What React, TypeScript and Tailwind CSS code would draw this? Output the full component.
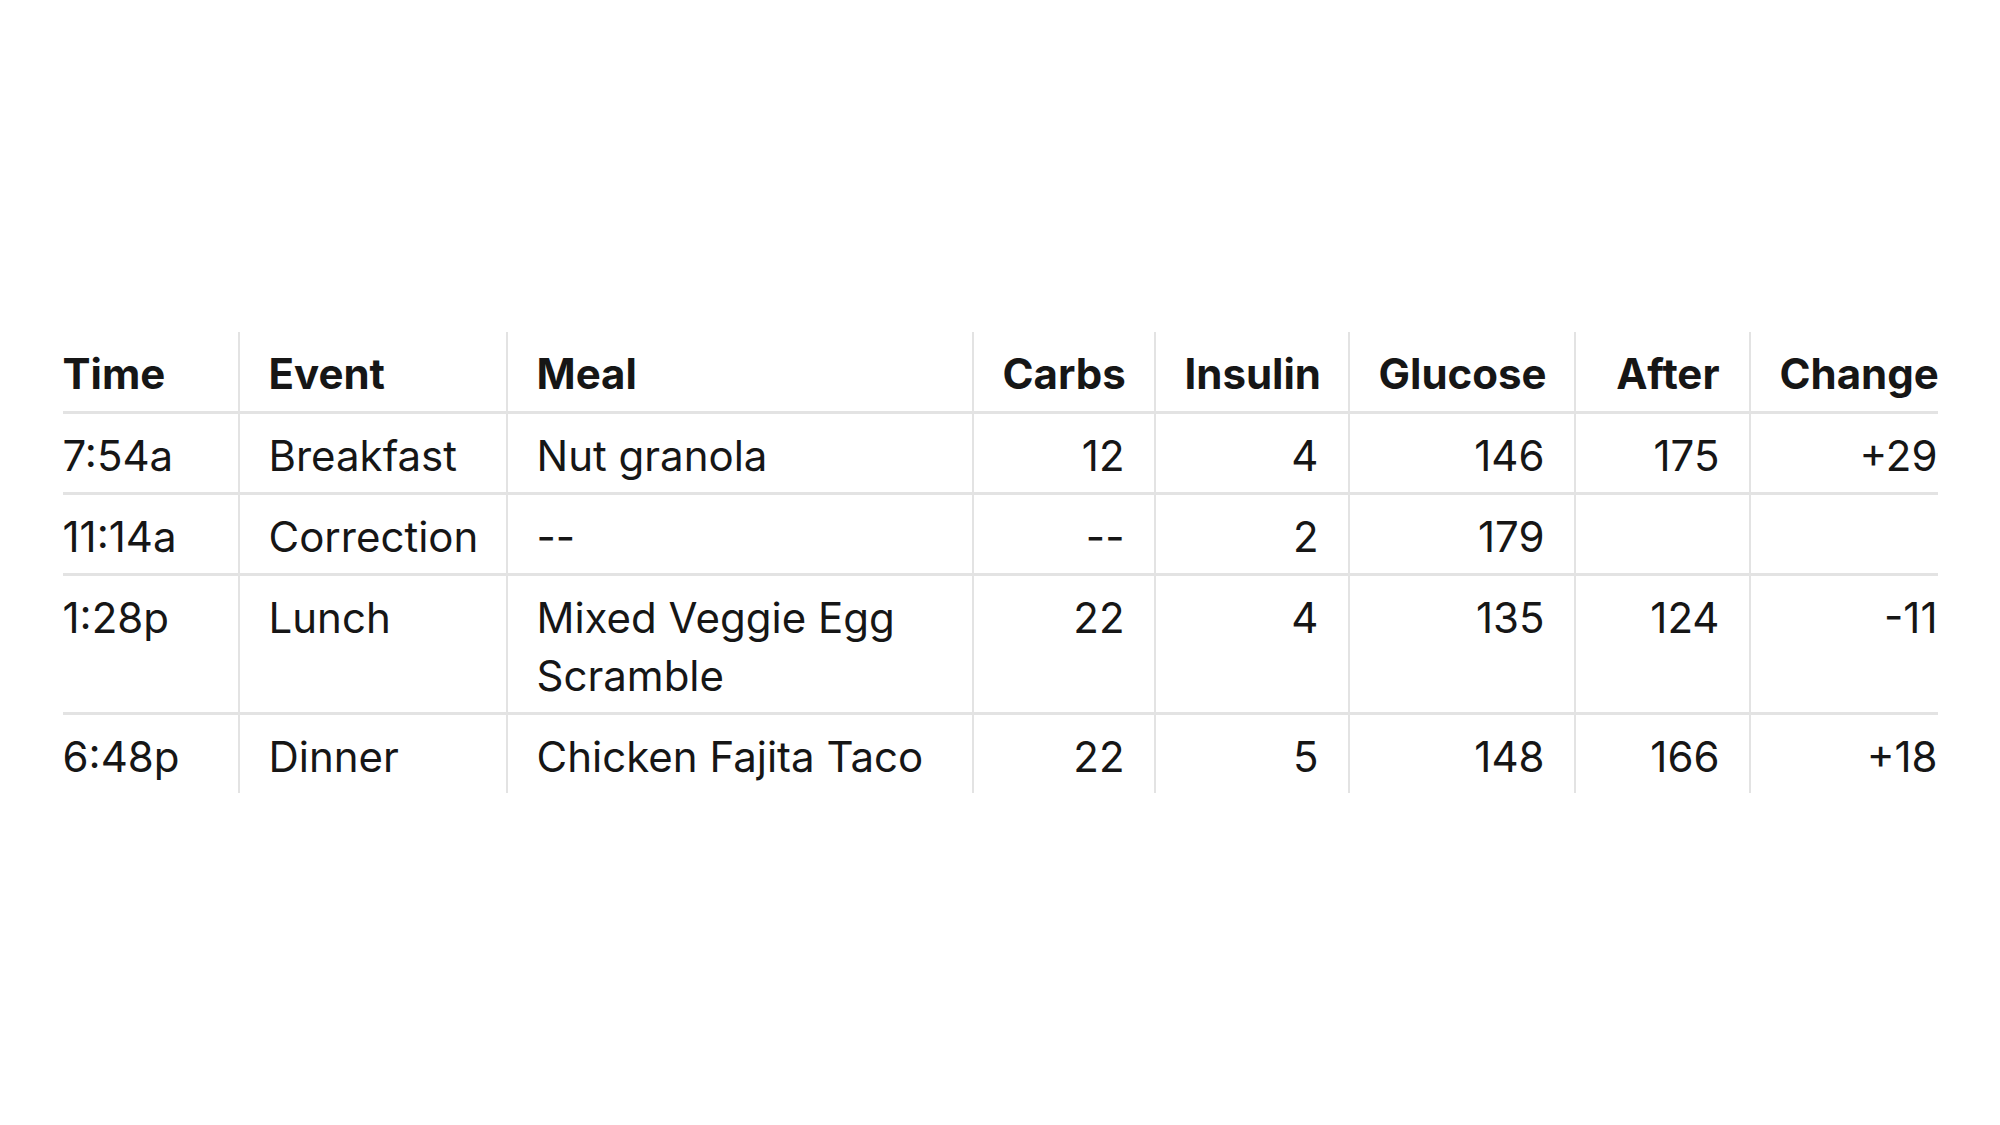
const headers = [
  { label: "Time", align: "left" },
  { label: "Event", align: "left" },
  { label: "Meal", align: "left" },
  { label: "Carbs", align: "right" },
  { label: "Insulin", align: "right" },
  { label: "Glucose", align: "right" },
  { label: "After", align: "right" },
  { label: "Change", align: "right" },
];

const rows = [
  ["7:54a", "Breakfast", "Nut granola", "12", "4", "146", "175", "+29"],
  ["11:14a", "Correction", "--", "--", "2", "179", "", ""],
  ["1:28p", "Lunch", "Mixed Veggie Egg Scramble", "22", "4", "135", "124", "-11"],
  ["6:48p", "Dinner", "Chicken Fajita Taco", "22", "5", "148", "166", "+18"],
];

const widths = ["w-[176px]", "w-[268px]", "w-[466px]", "w-[182px]", "w-[194px]", "w-[226px]", "w-[175px]", "w-[188px]"];

function cellClass(i: number) {
  let c = "px-[29px] align-top border-l-2 border-[#e3e3e3] ";
  if (i === 0) c = "pr-[29px] align-top ";
  if (i === headers.length - 1) c = "pl-[29px] align-top border-l-2 border-[#e3e3e3] ";
  return c + (headers[i].align === "right" ? "text-right" : "text-left");
}

export default function App() {
  return (
    <div
      className="w-full h-[1125px] bg-white flex items-center justify-center text-[#161616]"
      style={{ fontFamily: "Inter, 'Noto Sans', sans-serif" }}
    >
      <table className="table-fixed border-collapse w-[1875px] text-[42px] leading-[58px]">
        <colgroup>
          {widths.map((w, i) => (
            <col key={i} className={w} />
          ))}
        </colgroup>
        <thead>
          <tr className="border-b-[3px] border-[#e3e3e3]">
            {headers.map((h, i) => (
              <th key={h.label} className={cellClass(i) + " font-bold pt-[13px] pb-[8px]"}>
                {h.label}
              </th>
            ))}
          </tr>
        </thead>
        <tbody>
          {rows.map((r, ri) => (
            <tr key={ri} className={ri < rows.length - 1 ? "border-b-[3px] border-[#e3e3e3]" : ""}>
              {r.map((v, i) => (
                <td key={i} className={cellClass(i) + " pt-[13px] pb-[7px]"}>
                  {v}
                </td>
              ))}
            </tr>
          ))}
        </tbody>
      </table>
    </div>
  );
}
